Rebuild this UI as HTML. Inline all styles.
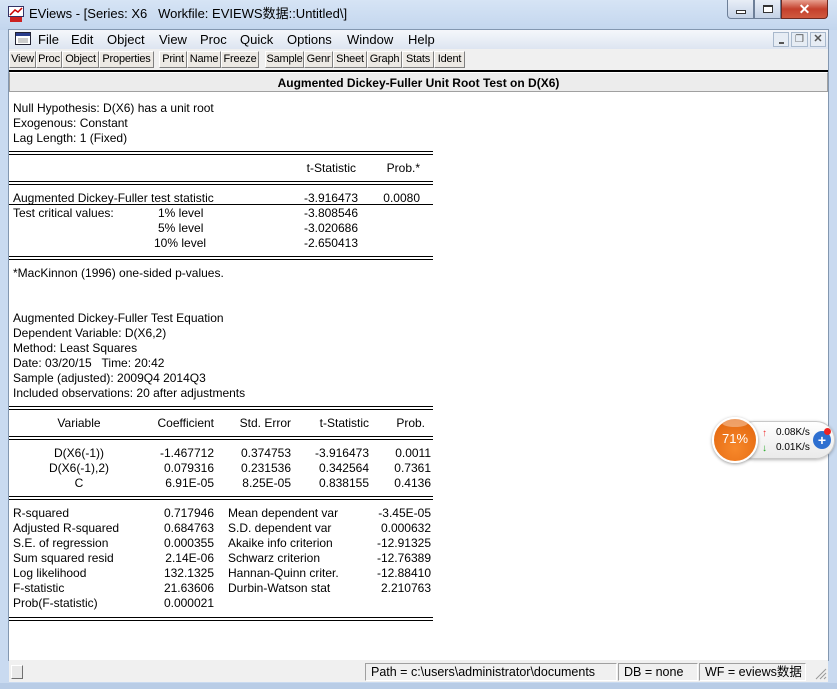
<!DOCTYPE html>
<html><head><meta charset="utf-8"><style>
*{margin:0;padding:0;box-sizing:border-box}
body{width:837px;height:689px;position:relative;overflow:hidden;background:#c9daf0;font-family:"Liberation Sans","Noto Sans CJK SC",sans-serif;font-size:12px;color:#000}
.a{position:absolute;white-space:nowrap;line-height:14px;margin-top:1px}
.r{text-align:right}
.c{text-align:center}
.ln1{position:absolute;left:9px;width:424px;height:1px;background:#000}
.btn{position:absolute;top:51px;height:17px;border:1px solid;border-color:#fff #808080 #808080 #fff;background:#ece9e4;font-size:11px;line-height:15px;text-align:center;overflow:hidden;white-space:nowrap;letter-spacing:-0.2px}
.menu span{position:absolute;top:32px;font-size:13px}
</style></head><body>
<div style="position:absolute;left:0;top:0;width:837px;height:30px;background:linear-gradient(#d6e4f5,#c3d6ee)"></div>
<svg style="position:absolute;left:8px;top:6px" width="16" height="16"><rect x="0.5" y="0.5" width="15" height="10" fill="#fff" stroke="#336"/><path d="M2 9 L7 4 L10 6 L14 2" stroke="#c00" fill="none" stroke-width="1.5"/><rect x="2" y="11" width="12" height="5" fill="#c22"/></svg>
<div class="a" style="left:29px;top:5px;font-size:13px;line-height:16px">EViews - [Series: X6&nbsp;&nbsp; Workfile: EVIEWS数据::Untitled\]</div>
<div style="position:absolute;left:727px;top:0;width:27px;height:19px;border:1px solid #6d7f98;border-top:none;border-radius:0 0 0 4px;background:linear-gradient(#e8eef7,#c4d2e6)"><div style="position:absolute;left:8px;top:10px;width:10px;height:4px;border:1px solid #333;background:#fff"></div></div>
<div style="position:absolute;left:754px;top:0;width:27px;height:19px;border:1px solid #6d7f98;border-top:none;background:linear-gradient(#e8eef7,#c4d2e6)"><div style="position:absolute;left:8px;top:5px;width:10px;height:8px;border:1px solid #333;border-top-width:2px;background:#fff"></div></div>
<div style="position:absolute;left:781px;top:0;width:47px;height:19px;border:1px solid #6d2a22;border-top:none;border-radius:0 0 4px 0;background:linear-gradient(#e8a090,#c4402c 50%,#d05a40)"><div style="position:absolute;left:0;width:45px;top:1px;text-align:center;color:#fff;font-weight:bold;font-size:14px;line-height:16px">✕</div></div>
<div style="position:absolute;left:8px;top:29px;width:821px;height:632px;background:#f0f0f0;border:1px solid #8397b0"></div>
<div style="position:absolute;left:9px;top:30px;width:819px;height:19px;background:linear-gradient(#f5f7fb,#dde5f1)"></div>
<svg style="position:absolute;left:15px;top:32px" width="16" height="13"><rect x="0.5" y="0.5" width="15" height="12" fill="#fff" stroke="#223"/><rect x="1" y="1" width="14" height="3" fill="#2a3d8c"/><rect x="3" y="6" width="10" height="5" fill="#ccc"/></svg>
<div class="menu">
<span style="left:38px">File</span><span style="left:71px">Edit</span><span style="left:107px">Object</span><span style="left:159px">View</span><span style="left:200px">Proc</span><span style="left:240px">Quick</span><span style="left:287px">Options</span><span style="left:347px">Window</span><span style="left:408px">Help</span>
</div>
<div style="position:absolute;left:773px;top:32px;width:16px;height:15px;border:1px solid #a8b8cc;background:#e6ecf4"><div style="position:absolute;left:5px;top:9px;width:5px;height:2px;background:#555"></div></div>
<div style="position:absolute;left:791px;top:32px;width:17px;height:15px;border:1px solid #a8b8cc;background:#e6ecf4;font-size:10px;line-height:13px;text-align:center;color:#555">❐</div>
<div style="position:absolute;left:810px;top:32px;width:16px;height:15px;border:1px solid #a8b8cc;background:#e6ecf4;font-size:11px;line-height:13px;text-align:center;color:#555;font-weight:bold">✕</div>
<div class="btn" style="left:9px;width:27px">View</div>
<div class="btn" style="left:36px;width:26px">Proc</div>
<div class="btn" style="left:62px;width:37px">Object</div>
<div class="btn" style="left:99px;width:55px">Properties</div>
<div class="btn" style="left:159px;width:28px">Print</div>
<div class="btn" style="left:187px;width:34px">Name</div>
<div class="btn" style="left:221px;width:38px">Freeze</div>
<div class="btn" style="left:265px;width:39px">Sample</div>
<div class="btn" style="left:304px;width:29px">Genr</div>
<div class="btn" style="left:333px;width:34px">Sheet</div>
<div class="btn" style="left:367px;width:35px">Graph</div>
<div class="btn" style="left:402px;width:32px">Stats</div>
<div class="btn" style="left:434px;width:31px">Ident</div>
<div style="position:absolute;left:9px;top:70px;width:819px;height:2px;background:#000"></div>
<div style="position:absolute;left:9px;top:72px;width:819px;height:20px;background:#ececec;border:1px solid #a0a0a0;border-top-color:#fff"></div>
<div class="a" style="left:9px;width:819px;top:75px;text-align:center;font-weight:bold">Augmented Dickey-Fuller Unit Root Test on D(X6)</div>
<div style="position:absolute;left:9px;top:92px;width:819px;height:568px;background:#fff"></div>

<div class="a" style="left:13px;top:100px">Null Hypothesis: D(X6) has a unit root</div>
<div class="a" style="left:13px;top:115px">Exogenous: Constant</div>
<div class="a" style="left:13px;top:130px">Lag Length: 1 (Fixed)</div>
<div class="ln1" style="top:151px"></div><div class="ln1" style="top:154px"></div>
<div class="a r" style="left:250px;width:106px;top:160px">t-Statistic</div>
<div class="a r" style="left:360px;width:60px;top:160px">Prob.*</div>
<div class="ln1" style="top:181px"></div><div class="ln1" style="top:184px"></div>
<div class="a" style="left:13px;top:190px">Augmented Dickey-Fuller test statistic</div>
<div class="a r" style="left:250px;width:108px;top:190px">-3.916473</div>
<div class="a r" style="left:360px;width:60px;top:190px">0.0080</div>
<div class="ln1" style="top:204px"></div>
<div class="a" style="left:13px;top:205px">Test critical values:</div>
<div class="a" style="left:158px;top:205px">1% level</div>
<div class="a" style="left:158px;top:220px">5% level</div>
<div class="a" style="left:154px;top:235px">10% level</div>
<div class="a r" style="left:250px;width:108px;top:205px">-3.808546</div>
<div class="a r" style="left:250px;width:108px;top:220px">-3.020686</div>
<div class="a r" style="left:250px;width:108px;top:235px">-2.650413</div>
<div class="ln1" style="top:256px"></div><div class="ln1" style="top:259px"></div>
<div class="a" style="left:13px;top:265px">*MacKinnon (1996) one-sided p-values.</div>

<div class="a" style="left:13px;top:310px">Augmented Dickey-Fuller Test Equation</div>
<div class="a" style="left:13px;top:325px">Dependent Variable: D(X6,2)</div>
<div class="a" style="left:13px;top:340px">Method: Least Squares</div>
<div class="a" style="left:13px;top:355px">Date: 03/20/15&nbsp;&nbsp; Time: 20:42</div>
<div class="a" style="left:13px;top:370px">Sample (adjusted): 2009Q4 2014Q3</div>
<div class="a" style="left:13px;top:385px">Included observations: 20 after adjustments</div>
<div class="ln1" style="top:406px"></div><div class="ln1" style="top:409px"></div>
<div class="a c" style="left:29px;width:100px;top:415px">Variable</div>
<div class="a r" style="left:130px;width:84px;top:415px">Coefficient</div>
<div class="a r" style="left:220px;width:71px;top:415px">Std. Error</div>
<div class="a r" style="left:295px;width:74px;top:415px">t-Statistic</div>
<div class="a r" style="left:370px;width:55px;top:415px">Prob.</div>
<div class="ln1" style="top:436px"></div><div class="ln1" style="top:439px"></div>
<div class="a c" style="left:29px;width:100px;top:445px">D(X6(-1))</div>
<div class="a c" style="left:29px;width:100px;top:460px">D(X6(-1),2)</div>
<div class="a c" style="left:29px;width:100px;top:475px">C</div>
<div class="a r" style="left:130px;width:84px;top:445px">-1.467712</div>
<div class="a r" style="left:130px;width:84px;top:460px">0.079316</div>
<div class="a r" style="left:130px;width:84px;top:475px">6.91E-05</div>
<div class="a r" style="left:220px;width:71px;top:445px">0.374753</div>
<div class="a r" style="left:220px;width:71px;top:460px">0.231536</div>
<div class="a r" style="left:220px;width:71px;top:475px">8.25E-05</div>
<div class="a r" style="left:295px;width:74px;top:445px">-3.916473</div>
<div class="a r" style="left:295px;width:74px;top:460px">0.342564</div>
<div class="a r" style="left:295px;width:74px;top:475px">0.838155</div>
<div class="a r" style="left:370px;width:61px;top:445px">0.0011</div>
<div class="a r" style="left:370px;width:61px;top:460px">0.7361</div>
<div class="a r" style="left:370px;width:61px;top:475px">0.4136</div>
<div class="ln1" style="top:496px"></div><div class="ln1" style="top:499px"></div>

<div class="a" style="left:13px;top:505px">R-squared</div>
<div class="a" style="left:13px;top:520px">Adjusted R-squared</div>
<div class="a" style="left:13px;top:535px">S.E. of regression</div>
<div class="a" style="left:13px;top:550px">Sum squared resid</div>
<div class="a" style="left:13px;top:565px">Log likelihood</div>
<div class="a" style="left:13px;top:580px">F-statistic</div>
<div class="a" style="left:13px;top:595px">Prob(F-statistic)</div>
<div class="a r" style="left:130px;width:84px;top:505px">0.717946</div>
<div class="a r" style="left:130px;width:84px;top:520px">0.684763</div>
<div class="a r" style="left:130px;width:84px;top:535px">0.000355</div>
<div class="a r" style="left:130px;width:84px;top:550px">2.14E-06</div>
<div class="a r" style="left:130px;width:84px;top:565px">132.1325</div>
<div class="a r" style="left:130px;width:84px;top:580px">21.63606</div>
<div class="a r" style="left:130px;width:84px;top:595px">0.000021</div>
<div class="a" style="left:228px;top:505px">Mean dependent var</div>
<div class="a" style="left:228px;top:520px">S.D. dependent var</div>
<div class="a" style="left:228px;top:535px">Akaike info criterion</div>
<div class="a" style="left:228px;top:550px">Schwarz criterion</div>
<div class="a" style="left:228px;top:565px">Hannan-Quinn criter.</div>
<div class="a" style="left:228px;top:580px">Durbin-Watson stat</div>
<div class="a r" style="left:350px;width:81px;top:505px">-3.45E-05</div>
<div class="a r" style="left:350px;width:81px;top:520px">0.000632</div>
<div class="a r" style="left:350px;width:81px;top:535px">-12.91325</div>
<div class="a r" style="left:350px;width:81px;top:550px">-12.76389</div>
<div class="a r" style="left:350px;width:81px;top:565px">-12.88410</div>
<div class="a r" style="left:350px;width:81px;top:580px">2.210763</div>
<div class="ln1" style="top:617px"></div><div class="ln1" style="top:620px"></div>

<div style="position:absolute;left:735px;top:421px;width:100px;height:38px;border-radius:19px;background:linear-gradient(#fff,#eaeaea);border:1px solid #c8c8c8;box-shadow:0 1px 3px rgba(0,0,0,.3)"></div>
<div style="position:absolute;left:712px;top:417px;width:46px;height:46px;border-radius:50%;background:radial-gradient(circle at 50% 70%,#f7882a,#e0620c);border:2px solid #fff;box-shadow:0 1px 3px rgba(0,0,0,.4)"></div>
<div style="position:absolute;left:722px;top:419px;width:26px;height:8px;border-radius:50%;background:rgba(255,255,255,.35)"></div>
<div class="a" style="left:712px;top:431px;width:46px;text-align:center;color:#fff;font-size:13px">71%</div>
<div class="a" style="left:762px;top:428px;color:#e33;font-size:10px;line-height:10px">↑</div>
<div class="a" style="left:762px;top:443px;color:#2a2;font-size:10px;line-height:10px">↓</div>
<div class="a" style="left:776px;top:426px;font-size:10px;line-height:12px">0.08K/s</div>
<div class="a" style="left:776px;top:441px;font-size:10px;line-height:12px">0.01K/s</div>
<div style="position:absolute;left:813px;top:431px;width:18px;height:18px;border-radius:50%;background:#2d6fd0;color:#fff;font-weight:bold;font-size:14px;line-height:18px;text-align:center">+</div>
<div style="position:absolute;left:824px;top:428px;width:7px;height:7px;border-radius:50%;background:#e22"></div>

<div style="position:absolute;left:9px;top:660px;width:819px;height:22px;background:#f0f0f0"></div>
<div style="position:absolute;left:11px;top:665px;width:12px;height:14px;border:1px solid;border-color:#fff #707070 #707070 #fff;background:#e8e8e8"></div>
<div class="a" style="left:365px;top:662px;width:252px;height:18px;border:1px solid;border-color:#a0a0a0 #fff #fff #a0a0a0;padding-left:5px;line-height:16px;font-size:12.5px">Path = c:\users\administrator\documents</div>
<div class="a" style="left:618px;top:662px;width:80px;height:18px;border:1px solid;border-color:#a0a0a0 #fff #fff #a0a0a0;padding-left:5px;line-height:16px;font-size:12.5px">DB = none</div>
<div class="a" style="left:699px;top:662px;width:107px;height:18px;border:1px solid;border-color:#a0a0a0 #fff #fff #a0a0a0;padding-left:5px;line-height:16px;font-size:12.5px">WF = eviews数据</div>
<svg style="position:absolute;left:815px;top:668px" width="12" height="12"><path d="M11 1L1 11M11 5L5 11M11 9L9 11" stroke="#999"/></svg>
<div style="position:absolute;left:0;top:683px;width:837px;height:6px;background:#b8cce6"></div>
</body></html>
